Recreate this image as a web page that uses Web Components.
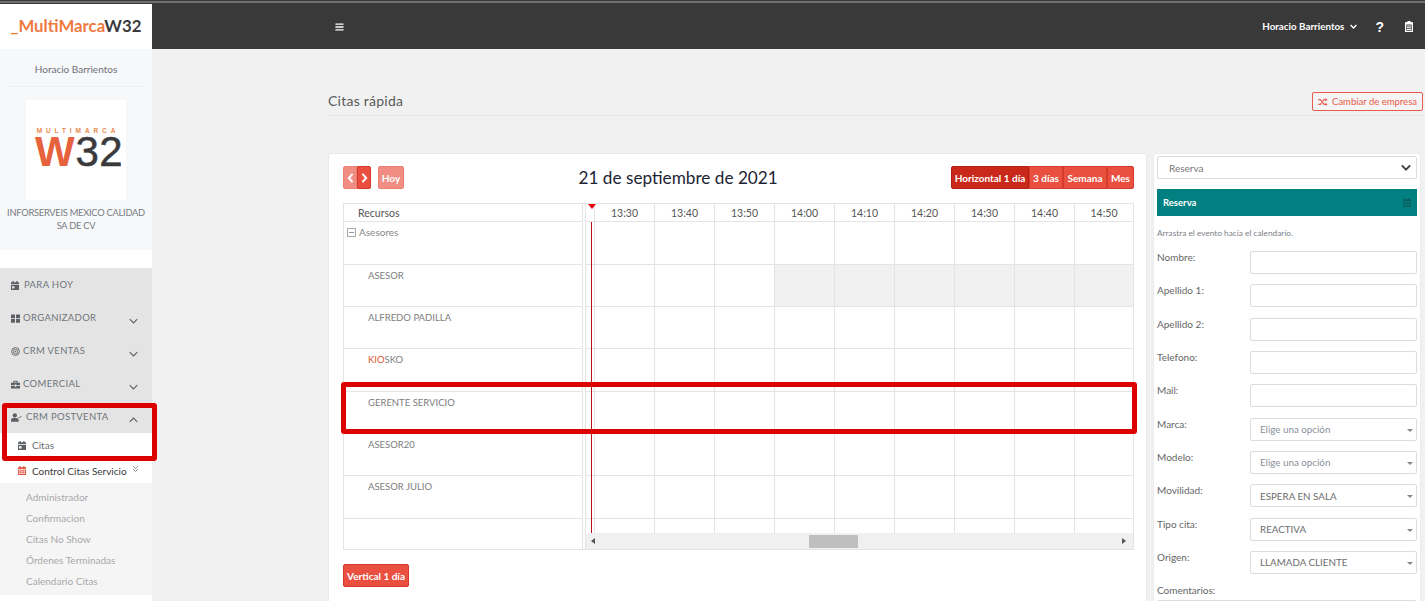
<!DOCTYPE html>
<html lang="es"><head><meta charset="utf-8"><title>Citas rápida</title>
<style>
html,body{margin:0;height:601px;overflow:hidden;background:#f1f1f1;font-family:Lato,"Noto Sans",sans-serif;}
x-app{display:block}
</style></head><body>
<x-app></x-app>
<script>
const ICONS={
 cal:'<svg viewBox="0 0 16 16" preserveAspectRatio="none"><path d="M3 0h2.500v2h5V0H13v2h3v3.500H0V2h3zM0 6.500h16V16H0zm2 3v4h5v-4z" fill-rule="evenodd" fill="currentColor"/></svg>',
 calgrid:'<svg viewBox="0 0 16 16" preserveAspectRatio="none"><path d="M3 0h2.500v2h5V0H13v2h3v3.500H0V2h3zM0 6.500h16V16H0zM2 8v2h3V8zm4.500 0v2h3V8zM11 8v2h3V8zm-9 3.500v2.500h3v-2.500zm4.500 0v2.500h3v-2.500zm4.500 0v2.500h3v-2.500z" fill-rule="evenodd" fill="currentColor"/></svg>',
 grid:'<svg viewBox="0 0 16 16" preserveAspectRatio="none"><path d="M0 1h7v6.500H0zM9 1h7v6.500H9zM0 9h7v6.500H0zM9 9h7v6.500H9z" fill="currentColor"/></svg>',
 target:'<svg viewBox="0 0 16 16" fill="none" stroke="currentColor"><circle cx="8" cy="8" r="7" stroke-width="1.600"/><circle cx="8" cy="8" r="4" stroke-width="1.500"/><circle cx="8" cy="8" r="1.500" fill="currentColor" stroke="none"/></svg>',
 case:'<svg viewBox="0 0 16 16" preserveAspectRatio="none"><path d="M5 1.500h6l1 1V5h4v4.500H9.500V8h-3v1.500H0V5h4V2.500zm1 1.500v2h4V3zM0 10.500h6.500v1.500h3v-1.500H16V15H0z" fill-rule="evenodd" fill="currentColor"/></svg>',
 usercheck:'<svg viewBox="0 0 20 16" preserveAspectRatio="none"><circle cx="7" cy="4.200" r="3.900" fill="currentColor"/><path d="M0 15.500v-2.500c0-2.500 2-4 4-4h6c2 0 4 1.500 4 4v2.500z" fill="currentColor"/><path d="M13.500 7l2 2 4-4" fill="none" stroke="currentColor" stroke-width="1.600"/></svg>',
 down:'<svg viewBox="0 0 12 8"><path d="M1 1.500l5 5 5-5" fill="none" stroke="currentColor" stroke-width="1.500"/></svg>',
 downb:'<svg viewBox="0 0 12 8"><path d="M1 1.500l5 5 5-5" fill="none" stroke="currentColor" stroke-width="2.400"/></svg>',
 up:'<svg viewBox="0 0 12 8"><path d="M1 6.500l5-5 5 5" fill="none" stroke="currentColor" stroke-width="1.500"/></svg>',
 dbl:'<svg viewBox="0 0 10 10"><path d="M1.500 1l3.500 3.500L8.500 1M1.500 5l3.500 3.500L8.500 5" fill="none" stroke="currentColor" stroke-width="1.200"/></svg>',
 left:'<svg viewBox="0 0 8 12"><path d="M6.500 1L2 6l4.500 5" fill="none" stroke="currentColor" stroke-width="2.400"/></svg>',
 right:'<svg viewBox="0 0 8 12"><path d="M1.500 1L6 6l-4.500 5" fill="none" stroke="currentColor" stroke-width="2.400"/></svg>',
 bars:'<svg viewBox="0 0 10 8"><path d="M1 0h8a.6.6 0 010 1.400H1A.6.6 0 011 0zm0 3.300h8a.6.6 0 010 1.400H1a.6.6 0 010-1.400zm0 3.300h8a.6.6 0 010 1.400H1a.6.6 0 010-1.400z" fill="currentColor"/></svg>',
 clip:'<svg viewBox="0 0 12 16" preserveAspectRatio="none"><path d="M4 0h4l.5 1.500H11l1 1V16H0V2.500l1-1h2.500zM2 5v9h8V5zm1 1.500h6V8H3zm0 2.500h6v1.500H3zm0 2.500h6V13H3z" fill-rule="evenodd" fill="currentColor"/></svg>',
 shuffle:'<svg viewBox="0 0 14 12"><path d="M0 2.500h3l5.500 7H11M0 9.500h3l1.700-2.200M6.700 4.700L8.500 2.500H11" fill="none" stroke="currentColor" stroke-width="1.800"/><path d="M10.500 0L14 2.500l-3.500 2.500zM10.500 7L14 9.500 10.500 12z" fill="currentColor"/></svg>'
};
class Base extends HTMLElement{
 render(css,html){const r=this.shadowRoot||this.attachShadow({mode:'open'});r.innerHTML='<style>'+css+'</style>'+html;}
}
const def=(n,c)=>customElements.define(n,c);

def('x-icon',class extends Base{connectedCallback(){
 this.render(':host{display:inline-flex;flex:none;width:var(--w,10px);height:var(--h,10px)}svg{width:100%;height:100%;display:block}',ICONS[this.getAttribute('name')]);
}});

def('x-topbar',class extends Base{connectedCallback(){
 this.render(`
 :host{display:flex;height:45px;border-top:4px solid #393939;background:#393939;position:relative;color:#fff}
 :host::before{content:"";position:absolute;left:0;right:0;top:-3px;height:2px;background:#6f6f6f}
 .logo{width:152px;background:#fff;display:flex;align-items:center;justify-content:center;font:700 16.800px/1 Lato,sans-serif;white-space:nowrap}
 .logo b{color:#ee7a42;font-weight:700}.logo i{color:#3a3a3a;font-style:normal;font-weight:700}
 .bars{margin-left:183px;--w:9px;--h:8px;align-self:center}
 .right{margin-left:auto;display:flex;align-items:center;font:700 9.800px/1 Lato,sans-serif;padding-right:12px}
 .name{white-space:nowrap}
 .chev{--w:7px;--h:5px;margin-left:6px}
 .q{font:700 14px/1 "Liberation Sans",sans-serif;margin-left:18px}
 .clip{--w:8px;--h:11px;margin-left:21px}`,
 `<div class="logo"><span><b>_MultiMarca</b><i>W32</i></span></div>
 <x-icon class="bars" name="bars"></x-icon>
 <div class="right"><span class="name">Horacio Barrientos</span><x-icon class="chev" name="downb"></x-icon><span class="q">?</span><x-icon class="clip" name="clip"></x-icon></div>`);
}});

def('x-profile',class extends Base{connectedCallback(){
 this.render(`
 :host{display:flex;flex-direction:column;align-items:center;height:201px;background:#f7f8fa;color:#6d7178;font:10px/13px Lato,sans-serif;text-align:center}
 .n{height:38px;width:140px;border-bottom:1px solid #eceef0;padding-top:14px;box-sizing:border-box;white-space:nowrap}
 .box{width:100px;height:100px;background:#fff;margin-top:13px;display:flex;flex-direction:column;align-items:center;justify-content:center;padding-bottom:6px;box-sizing:border-box}
 .m{font:700 6.500px/7px "Liberation Sans",sans-serif;letter-spacing:3.900px;color:#e98a4e;margin:0 0 0 4px;white-space:nowrap}
 .w{font:42px/31px "Liberation Sans",sans-serif;color:#3a3a3c;white-space:nowrap;margin:2px 0 0 6px;-webkit-text-stroke:.5px #3a3a3c;letter-spacing:.4px}
 .w b{color:#e5623c;font-weight:700;-webkit-text-stroke:0;letter-spacing:1px}
 .c{margin-top:6px;width:146px;font-size:9.300px;letter-spacing:-.25px;color:#787c84}`,
 `<div class="n">Horacio Barrientos</div>
 <div class="box"><div class="m">MULTIMARCA</div><div class="w"><b>W</b>32</div></div>
 <div class="c">INFORSERVEIS MEXICO CALIDAD SA DE CV</div>`);
}});

def('x-nav-item',class extends Base{connectedCallback(){
 const ic=this.getAttribute('icon'),ch=this.getAttribute('chev');
 this.render(`
 :host{display:flex;align-items:center;height:33px;padding:1px 0 0 11px;box-sizing:border-box;position:relative;color:#70747a;font:9.500px/1 Lato,sans-serif;letter-spacing:.34px;white-space:nowrap}
 x-icon{--w:var(--iw,9px);--h:9px;margin-right:var(--gap,3px);color:#5c5f63}
 .c{position:absolute;left:129px;top:17px;--w:9px;--h:6px;margin:0}`,
 `<x-icon name="${ic}"></x-icon><span><slot></slot></span>${ch?`<x-icon class="c" name="${ch}"></x-icon>`:''}`);
}});

def('x-sub-item',class extends Base{connectedCallback(){
 this.render(`:host{display:flex;align-items:center;height:21px;padding-left:26px;color:#a9a9a9;font:10px/1 Lato,sans-serif;white-space:nowrap}`,'<slot></slot>');
}});

def('x-sidebar',class extends Base{connectedCallback(){
 this.render(`
 :host{display:block;width:152px;background:#fff;flex:none;height:552px}
 .gap{height:18px}
 .group{background:#e4e4e4}
 .row{display:flex;align-items:center;height:25px;padding-left:18px;font:10px/1 Lato,sans-serif;color:#6a6e74;position:relative;white-space:nowrap}
 .row x-icon{--w:8px;--h:9px;margin-right:6px;color:#5c5f63}
 .row.cit{padding-bottom:1px;box-sizing:border-box}
 .ctl{color:#3a3a3a;}
 .ctl x-icon{color:#e8503f}
 .ctl .d{position:absolute;left:132px;top:7px;--w:7px;--h:8px;color:#777;margin:0}
 .sub{background:#f5f5f5;padding:3px 0 4px}`,
 `<x-profile></x-profile><div class="gap"></div>
 <div class="group">
  <x-nav-item icon="cal" style="--iw:8px;--gap:5px">PARA HOY</x-nav-item>
  <x-nav-item icon="grid" chev="down">ORGANIZADOR</x-nav-item>
  <x-nav-item icon="target" chev="down">CRM VENTAS</x-nav-item>
  <x-nav-item icon="case" chev="down">COMERCIAL</x-nav-item>
  <x-nav-item icon="usercheck" style="--iw:11px;--gap:4px" chev="up">CRM POSTVENTA</x-nav-item>
 </div>
 <div class="row cit"><x-icon name="cal"></x-icon><span>Citas</span></div>
 <div class="row ctl"><x-icon name="calgrid"></x-icon><span>Control Citas Servicio</span><x-icon class="d" name="dbl"></x-icon></div>
 <div class="sub"><x-sub-item>Administrador</x-sub-item><x-sub-item>Confirmacion</x-sub-item><x-sub-item>Citas No Show</x-sub-item><x-sub-item>Órdenes Terminadas</x-sub-item><x-sub-item>Calendario Citas</x-sub-item></div>`);
}});

def('x-btn',class extends Base{connectedCallback(){
 this.render(`
 :host{display:inline-flex;align-items:center;justify-content:center;height:23px;box-sizing:border-box;background:#e9503f;border:1px solid #d63a2b;color:#fff;font:700 10px/1 Lato,sans-serif;white-space:nowrap;border-radius:var(--r,2px);width:var(--bw,auto)}
 :host([dim]){background:#f28d83;border-color:#ec7f74}
 :host([dark]){background:#c9281a;border-color:#b02015}
 x-icon{--w:7px;--h:10px}`,
 this.hasAttribute('icon')?`<x-icon name="${this.getAttribute('icon')}"></x-icon>`:'<slot></slot>');
}});

def('x-scheduler',class extends Base{connectedCallback(){
 const rows=[['Asesores',43,1],['ASESOR',42],['ALFREDO PADILLA',42],['KIOSKO',43],['GERENTE SERVICIO',42],['ASESOR20',42],['ASESOR JULIO',43]];
 const times=['13:30','13:40','13:50','14:00','14:10','14:20','14:30','14:40','14:50'];
 const res=rows.map(r=>`<div class="rr" style="height:${r[1]}px">${r[2]?`<span class="tree"><i></i>${r[0]}</span>`:`<span class="lbl">${r[0]==='KIOSKO'?'<em>KIO</em>SKO':r[0]}</span>`}</div>`).join('');
 const cells=(h,shade)=>`<div class="tr" style="height:${h}px"><div class="td first"></div>${times.map((t,i)=>`<div class="td${shade&&i>=3?' sh':''}"></div>`).join('')}</div>`;
 const body=rows.map((r,i)=>cells(r[1],i===1)).join('');
 this.render(`
 :host{display:flex;width:791px;height:347px;box-sizing:border-box;border:1px solid #e4e4e4;background:#fff;font:10.500px/1 Lato,sans-serif;color:#7b7b7b;white-space:nowrap}
 .res{width:238px;flex:none;border-right:1px solid #e4e4e4;display:flex;flex-direction:column}
 .split{width:2px;flex:none}
 .time{flex:1;min-width:0;border-left:1px solid #e4e4e4;position:relative;display:flex;flex-direction:column}
 .hd{height:18px;box-sizing:border-box;border-bottom:1px solid #e4e4e4;flex:none}
 .res .hd{padding:4px 0 0 14px;color:#555;}
 .rr{box-sizing:border-box;border-bottom:1px solid #e4e4e4;padding:6px 0 0 24px;font-size:9.500px}
 .tail{flex:1}
 .lbl{display:block;color:#7d7d7d}
 em{font-style:normal;color:#e0562f}
 .tree{display:flex;align-items:center;margin:-1px 0 0 -21px;color:#8a8a8a;gap:3px;font-size:10px}
 .tree i{width:7px;height:7px;border:1px solid #aaa;position:relative;display:block}
 .tree i::after{content:"";position:absolute;left:1px;right:1px;top:3px;height:1px;background:#999}
 .tr{display:flex;box-sizing:border-box;border-bottom:1px solid #e4e4e4}
 .td{width:60px;flex:none;box-sizing:border-box;border-right:1px solid #e4e4e4}
 .td:last-child{border-right:0;flex:1}
 .td.first{width:9px}
 .td.sh{background:#f1f1f1}
 .hd.tr .td{display:flex;align-items:center;justify-content:center;color:#555;padding-top:1px}
 .grid{flex:1;min-height:0;overflow:hidden}
 .tailrow{height:14px}
 .bar{height:16px;flex:none;background:#f0f0f0;display:flex;align-items:center;position:relative}
 .thumb{position:absolute;left:223px;top:2px;width:49px;height:13px;background:#bfbfbf}
 .al,.ar{position:absolute;top:5px;width:0;height:0;border-top:3.500px solid transparent;border-bottom:3.500px solid transparent}
 .al{left:5px;border-right:4px solid #555}.ar{right:7px;border-left:4px solid #555}
 .now{position:absolute;left:5px;top:18px;width:1px;height:311px;background:#b5121b}
 .tri{position:absolute;left:2px;top:0;width:0;height:0;border-left:4px solid transparent;border-right:4px solid transparent;border-top:5px solid #e8000f}`,
 `<div class="res"><div class="hd">Recursos</div>${res}<div class="tail"></div></div>
 <div class="split"></div>
 <div class="time">
  <div class="hd tr"><div class="td first"></div>${times.map(t=>`<div class="td">${t}</div>`).join('')}</div>
  <div class="grid">${body}<div class="tr tailrow" style="border:0"><div class="td first"></div>${times.map(()=>'<div class="td"></div>').join('')}</div></div>
  <div class="bar"><span class="al"></span><div class="thumb"></div><span class="ar"></span></div>
  <div class="tri"></div><div class="now"></div>
 </div>`);
}});

def('x-calendar-card',class extends Base{connectedCallback(){
 this.render(`
 :host{display:block;width:819px;box-sizing:border-box;height:460px;background:#fff;border:1px solid #e9e9e9;border-radius:3px;padding:12px 12px 0 14px}
 .bar{display:flex;justify-content:space-between;align-items:center;height:23px;margin-bottom:14px}
 .l{display:flex;width:61px}
 .h{font:17.200px/1 Lato,sans-serif;color:#1d2433;white-space:nowrap;width:198px;text-align:center}
 .r{display:flex;width:183px}
 .hoy{margin-left:7px}`,
 `<div class="bar">
  <div class="l"><x-btn dim icon="left" style="--bw:14px;--r:2px 0 0 2px"></x-btn><x-btn icon="right" style="--bw:14px;--r:0 2px 2px 0"></x-btn><x-btn dim class="hoy" style="--bw:26px">Hoy</x-btn></div>
  <div class="h">21 de septiembre de 2021</div>
  <div class="r"><x-btn dark style="--bw:78px;--r:2px 0 0 2px">Horizontal 1 día</x-btn><x-btn style="--bw:34px;--r:0">3 días</x-btn><x-btn style="--bw:44px;--r:0">Semana</x-btn><x-btn style="--bw:27px;--r:0 2px 2px 0">Mes</x-btn></div>
 </div>
 <x-scheduler></x-scheduler>
 <x-btn style="--bw:66px;margin-top:14px">Vertical 1 día</x-btn>`);
}});

def('x-form-row',class extends Base{connectedCallback(){
 const sel=this.getAttribute('select'),ph=this.hasAttribute('ph');
 this.render(`
 :host{display:grid;grid-template-columns:93px 167px;height:33.330px;font:10px/14px Lato,sans-serif;color:#666}
 label{margin-top:-1px}
 .f{height:23px;box-sizing:border-box;border:1px solid #dcdcdc;border-radius:2px;background:#fff;display:flex;align-items:center;padding-left:9px;font-size:9.800px;color:${ph?'#8a8f9c':'#6c6c6c'};position:relative;white-space:nowrap}
 .f.s::after{content:"";position:absolute;right:3px;top:10px;border-left:3px solid transparent;border-right:3px solid transparent;border-top:3.500px solid #888}`,
 `<label><slot></slot></label><div class="f${sel!==null?' s':''}">${sel||''}</div>`);
}});

def('x-form-panel',class extends Base{connectedCallback(){
 this.render(`
 :host{display:block;width:268px;box-sizing:border-box;height:460px;background:#fff;border:1px solid #ececec;border-radius:3px;padding:2px 3px 0;overflow:hidden;font:10px/14px Lato,sans-serif;color:#666}
 .sel{height:23px;box-sizing:border-box;border:1px solid #dcdcdc;border-radius:2px;display:flex;align-items:center;justify-content:space-between;padding:0 5px 0 11px;color:#777}
 .sel x-icon{--w:10px;--h:7px;color:#444}
 .head{height:27px;margin-top:10px;background:#008080;color:#fff;display:flex;align-items:center;justify-content:space-between;padding:0 6px;font-weight:700;font-size:9.500px}
 .head x-icon{--w:8px;--h:9px;color:#0b5f5f}
 .hint{font-size:8.300px;line-height:12px;color:#7c8288;margin:11px 0 12px;white-space:nowrap}
 .com{height:14px;margin-top:-1px}
 .ta{height:40px;border:1px solid #dcdcdc;margin-top:3px;border-radius:2px}`,
 `<div class="sel"><span>Reserva</span><x-icon name="downb"></x-icon></div>
 <div class="head"><span>Reserva</span><x-icon name="calgrid"></x-icon></div>
 <div class="hint">Arrastra el evento hacia el calendario.</div>
 <x-form-row>Nombre:</x-form-row><x-form-row>Apellido 1:</x-form-row><x-form-row>Apellido 2:</x-form-row><x-form-row>Telefono:</x-form-row><x-form-row>Mail:</x-form-row>
 <x-form-row select="Elige una opción" ph>Marca:</x-form-row><x-form-row select="Elige una opción" ph>Modelo:</x-form-row>
 <x-form-row select="ESPERA EN SALA">Movilidad:</x-form-row><x-form-row select="REACTIVA">Tipo cita:</x-form-row><x-form-row select="LLAMADA CLIENTE">Origen:</x-form-row>
 <div class="com">Comentarios:</div><div class="ta"></div>`);
}});

def('x-highlight',class extends Base{connectedCallback(){
 this.render(`:host{position:absolute;box-sizing:border-box;border:5.500px solid #dc0000;border-radius:3px;pointer-events:none;z-index:5}`,'');
}});

def('x-app',class extends Base{connectedCallback(){
 this.render(`
 :host{display:block;position:relative;width:1425px;height:601px;overflow:hidden;background:#f1f1f1}
 .wrap{display:flex;height:552px}
 main{flex:1;min-width:0;padding:0 2px 0 176px}
 .title{height:67px;box-sizing:border-box;border-bottom:1px solid #e6e6e6;display:flex;align-items:flex-end;justify-content:space-between;padding-bottom:4px;margin-bottom:37px;}
 h1{margin:0;font:14px/20px Lato,sans-serif;color:#5a5a5a;letter-spacing:.25px}
 .sw{height:19px;box-sizing:border-box;border:1px solid #ea5a4c;border-radius:2px;display:flex;align-items:center;gap:4px;width:111px;justify-content:center;color:#ea5a4c;font:9.500px/1 Lato,sans-serif;white-space:nowrap;background:#f5f5f5}
 .sw x-icon{--w:10px;--h:8px}
 .cols{display:flex;gap:6px}
 `,
 `<x-topbar></x-topbar>
 <div class="wrap"><x-sidebar></x-sidebar>
  <main>
   <div class="title"><h1>Citas rápida</h1><div class="sw"><x-icon name="shuffle"></x-icon>Cambiar de empresa</div></div>
   <div class="cols"><x-calendar-card></x-calendar-card><x-form-panel></x-form-panel></div>
  </main></div>
 <x-highlight style="left:2px;top:403px;width:155px;height:58px"></x-highlight>
 <x-highlight style="left:341px;top:382px;width:796px;height:52px"></x-highlight>`);
}});
</script>
</body></html>
